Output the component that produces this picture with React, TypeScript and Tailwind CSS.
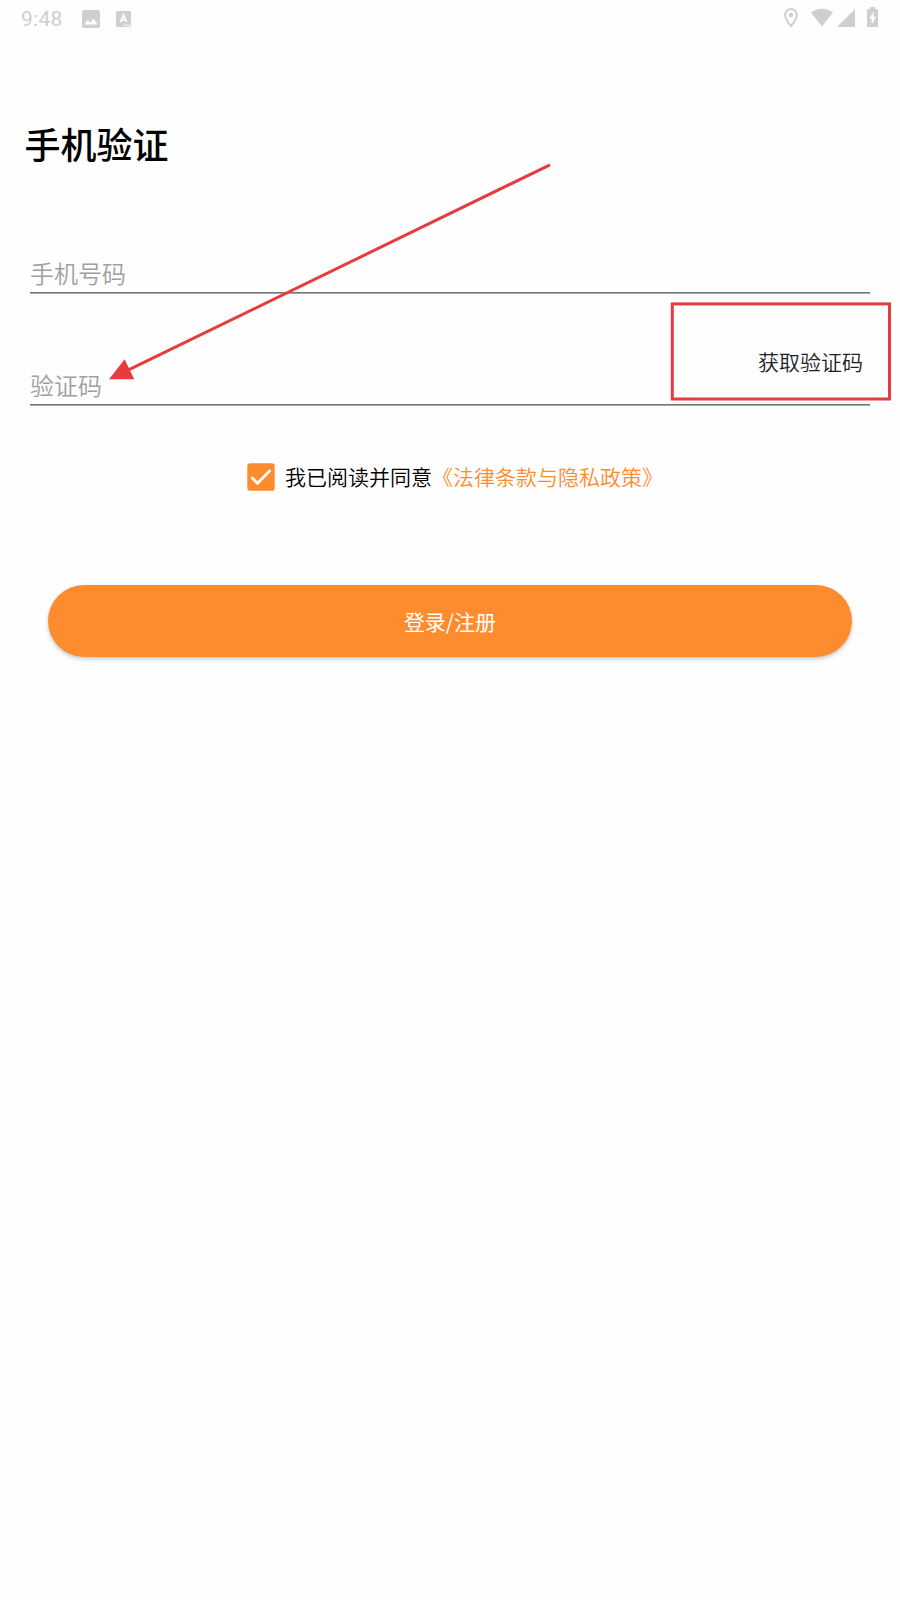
import type { ReactNode } from 'react';

interface FieldProps {
  placeholder: string;
  children?: ReactNode;
}

function StatusBar() {
  return (
    <header className="flex h-9 items-center justify-between pl-[21px] pr-[22px] text-[#cfcfcf]">
      <div className="flex items-center">
        <span className="mt-px w-[61px] font-[Roboto] text-[21px] leading-9 tracking-[0.3px]">9:48</span>
        <svg className="mt-px h-[18px] w-[18px]" viewBox="0 0 18 18" fill="currentColor">
          <path fillRule="evenodd" d="M2 0h14a2 2 0 0 1 2 2v14a2 2 0 0 1-2 2H2a2 2 0 0 1-2-2V2a2 2 0 0 1 2-2Zm.5 14.5h13.2l-4.3-6-3.2 4.2-2.4-2.8Z" />
        </svg>
        <svg className="ml-4 mt-px h-4 w-[15px]" viewBox="0 0 15 16" fill="currentColor">
          <rect width="15" height="16" rx="1.6" />
          <path d="M4.3 11.2 7.5 4.2l3.2 7M5.4 9.1h4.2" fill="none" stroke="#fefefe" strokeWidth="1.8" />
          <path d="M8 13.6h1.3v1.3H8zM10.3 13.6h1.3v1.3h-1.3zM12.6 13.6h1.3v1.3h-1.3z" fill="#fefefe" />
        </svg>
      </div>
      <div className="flex items-center pb-0.5">
        <svg className="mt-0.5 h-5 w-[14px]" viewBox="0 0 14 20" fill="none" stroke="currentColor">
          <path d="M7 18.2C3.5 13.8 1.1 10.4 1.1 6.9a5.9 5.9 0 0 1 11.8 0c0 3.5-2.4 6.9-5.9 11.3Z" strokeWidth="2" />
          <circle cx="7" cy="7" r="2.3" fill="currentColor" stroke="none" />
        </svg>
        <svg className="ml-[13px] h-[19px] w-[22px]" viewBox="0 0 22 19" fill="currentColor">
          <path d="M0 4.5C6.5-.6 15.5-.6 22 4.5L11 18.5Z" />
        </svg>
        <svg className="ml-1 mt-px h-[18px] w-[18px]" viewBox="0 0 18 18" fill="currentColor">
          <path d="M18 0v18H0Z" />
        </svg>
        <svg className="ml-3 h-5 w-[11px]" viewBox="0 0 11 20" fill="currentColor">
          <path d="M3 0h5v2h2a1 1 0 0 1 1 1v16a1 1 0 0 1-1 1H1a1 1 0 0 1-1-1V3a1 1 0 0 1 1-1h2Z" />
          <path d="M6.5 4.8 2.3 11.8h2.4v5.7l4.4-7.7H6.5Z" fill="#fefefe" />
        </svg>
      </div>
    </header>
  );
}

function Field({ placeholder, children }: FieldProps) {
  return (
    <div className="mb-px flex h-[111px] items-end justify-between border-b border-[#757575] shadow-[0_1px_0_#a8a8a8]">
      <span className="pb-[3px] text-[24px] font-[350] leading-8 text-[#a0a0a0]">{placeholder}</span>
      {children}
    </div>
  );
}

function Annotations() {
  return (
    <svg className="pointer-events-none absolute left-0 top-0 h-[420px] w-[900px]" viewBox="0 0 900 420">
      <path d="M550 164.8 128 370.2" stroke="#e53c3e" strokeWidth="3" />
      <path d="M109 379.3 124.6 359.3 134.3 379.3Z" fill="#e53c3e" />
      <rect x="672.3" y="303.9" width="217.2" height="95.1" fill="none" stroke="#e53c3e" strokeWidth="3" />
    </svg>
  );
}

export default function App() {
  return (
    <div className="relative h-[1600px] w-[900px] overflow-hidden bg-[#fefefe] font-['Noto_Sans_CJK_SC',sans-serif]">
      <StatusBar />
      <h1 className="ml-[24.5px] mt-[81px] text-[36px] font-medium leading-[52px] text-black">手机验证</h1>
      <main className="mx-[30px] mt-[13px]">
        <Field placeholder="手机号码" />
        <Field placeholder="验证码">
          <button className="mr-[7px] pb-7 text-[21px] font-[350] leading-[30px] text-[#222]">获取验证码</button>
        </Field>
      </main>
      <div className="ml-[247px] mt-14 flex h-8 items-center text-[21px] font-[350] leading-8">
        <svg className="mr-[10px] h-7 w-7 shrink-0" viewBox="0 0 28 28">
          <rect x=".3" y=".3" width="27.4" height="27.4" rx="2.8" fill="#fd8c2f" />
          <path d="m4.5 14.3 6 6L23.5 7" fill="none" stroke="#fff" strokeWidth="2.8" />
        </svg>
        <span className="pb-0.5 text-black">我已阅读并同意</span>
        <span className="pb-0.5 text-[#fd8c2f]">《法律条款与隐私政策》</span>
      </div>
      <button className="mx-12 mt-[92px] block h-[72px] w-[804px] rounded-full bg-[#fd8c2f] pt-px text-[21px] text-white shadow-[0_2px_4px_rgba(0,0,0,0.22)]">
        登录/注册
      </button>
      <Annotations />
    </div>
  );
}
